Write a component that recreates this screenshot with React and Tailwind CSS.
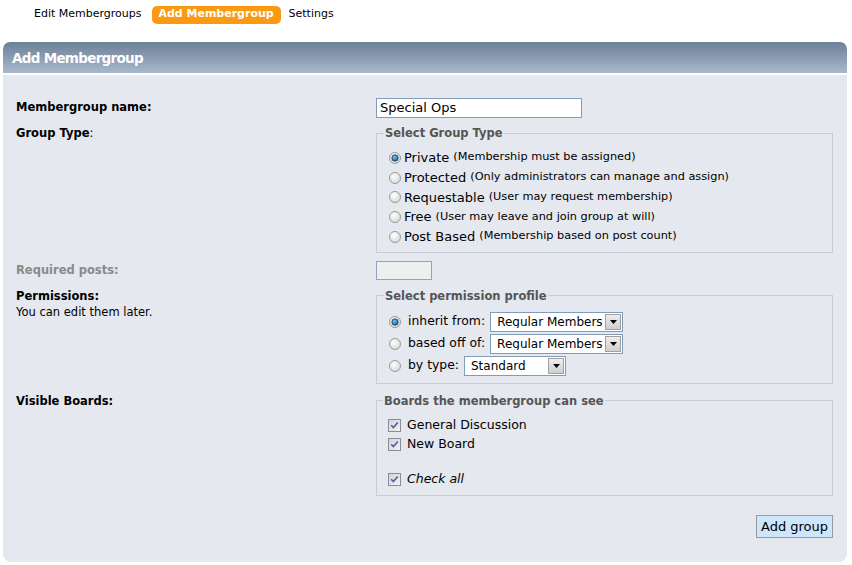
import React from "react";

function Radio({ checked }) {
  return (
    <svg width="12" height="12" viewBox="0 0 12 12" className="shrink-0">
      <defs>
        <radialGradient id="rg" cx="0.4" cy="0.35" r="0.7">
          <stop offset="0" stopColor="#ffffff" />
          <stop offset="1" stopColor="#d6d6d6" />
        </radialGradient>
        <radialGradient id="rb" cx="0.4" cy="0.35" r="0.7">
          <stop offset="0" stopColor="#7cc0ef" />
          <stop offset="1" stopColor="#0b5c99" />
        </radialGradient>
      </defs>
      <circle cx="6" cy="6" r="5.5" fill="url(#rg)" stroke="#9a9a9a" strokeWidth="1" />
      {checked && <circle cx="6" cy="6" r="3.2" fill="url(#rb)" stroke="#1d3f5e" strokeWidth="0.8" />}
    </svg>
  );
}

function Check() {
  return (
    <svg width="13" height="13" viewBox="0 0 13 13" className="shrink-0">
      <defs>
        <linearGradient id="cg" x1="0" y1="0" x2="1" y2="1">
          <stop offset="0" stopColor="#d2d2d6" />
          <stop offset="1" stopColor="#f3f3f5" />
        </linearGradient>
      </defs>
      <rect x="0.5" y="0.5" width="12" height="12" fill="url(#cg)" stroke="#8c8c96" />
      <path d="M3.2 6.2 L5.4 8.6 L9.8 3.4" fill="none" stroke="#4a5fb0" strokeWidth="1.6" />
    </svg>
  );
}

function Select({ value, width }) {
  return (
    <div
      className="flex h-[20px] items-center border border-[#7f9db9] bg-white"
      style={{ width }}
    >
      <span className="flex-1 overflow-hidden whitespace-nowrap pl-[6px] text-[12px] leading-none text-black">
        {value}
      </span>
      <span className="mr-[1px] flex h-[16px] w-[16px] shrink-0 items-center justify-center border border-[#a0a0a0] bg-gradient-to-b from-[#eeeeee] to-[#cfcfcf]">
        <svg width="7" height="4" viewBox="0 0 7 4">
          <path d="M0 0 L7 0 L3.5 4 Z" fill="#000" />
        </svg>
      </span>
    </div>
  );
}

function Legend({ children }) {
  return (
    <legend className="-ml-[5px] px-[1px] text-[11.5px] font-bold leading-4 text-[#555555]">
      {children}
    </legend>
  );
}

export default function App() {
  const groupTypes = [
    ["Private", "(Membership must be assigned)", true],
    ["Protected", "(Only administrators can manage and assign)", false],
    ["Requestable", "(User may request membership)", false],
    ["Free", "(User may leave and join group at will)", false],
    ["Post Based", "(Membership based on post count)", false],
  ];
  return (
    <div className="min-h-[565px] bg-white font-['DejaVu_Sans',Verdana,sans-serif] text-black">
      {/* tabs */}
      <div className="flex h-[28px] items-center pl-[34px] pt-[1px] text-[11px]">
        <span>Edit Membergroups</span>
        <span className="ml-[10px] flex h-[18px] w-[129px] items-center justify-center rounded-[5px] bg-[#f99a12] font-bold text-white">
          Add Membergroup
        </span>
        <span className="ml-[8px]">Settings</span>
      </div>

      <div className="ml-[3px] mt-[14px] w-[844px]">
        <div className="flex h-[31px] items-center rounded-t-[7px] bg-gradient-to-b from-[#6c8097] to-[#a9b9cd] pl-[9px] pt-[2px] text-[13.5px] font-bold tracking-[-0.7px] text-white">
          Add Membergroup
        </div>
        <div className="mt-[2px] rounded-b-[8px] bg-[#e5e8ee] pb-[24px] pl-[13px] pr-[14px] pt-[23px] text-[11.5px]">
          {/* name */}
          <div className="flex items-center">
            <div className="w-[360px] font-bold">Membergroup name:</div>
            <div className="flex h-[20px] w-[206px] items-center border border-[#7f9db9] bg-white pl-[3px] text-[13px]">
              Special Ops
            </div>
          </div>

          {/* group type */}
          <div className="mt-[7px] flex items-start">
            <div className="w-[360px] leading-4">
              <span className="font-bold">Group Type</span>:
            </div>
            <fieldset className="flex-1 border border-[#c8ccd3] pb-[5px] pl-[12px]">
              <Legend>Select Group Type</Legend>
              <div className="mt-[7px] flex flex-col">
                {groupTypes.map(([a, b, c]) => (
                  <div key={a} className="flex h-[19.75px] items-center">
                    <Radio checked={c} />
                    <span className="ml-[3px] text-[13px]">{a}</span>
                    <span className="ml-[4px] text-[11.3px]">{b}</span>
                  </div>
                ))}
              </div>
            </fieldset>
          </div>

          {/* required posts */}
          <div className="mt-[8px] flex items-center">
            <div className="w-[360px] font-bold text-[#8a8a8a]">Required posts:</div>
            <div className="h-[19px] w-[56px] border border-[#8fa5bf] bg-[#eeeff1]" />
          </div>

          {/* permissions */}
          <div className="mt-[8px] flex items-start">
            <div className="w-[360px] leading-4">
              <div className="font-bold">Permissions:</div>
              <div className="text-[11.5px]">You can edit them later.</div>
            </div>
            <fieldset className="flex-1 border border-[#c8ccd3] pb-[7px] pl-[12px]">
              <Legend>Select permission profile</Legend>
              <div className="mt-[8px] flex flex-col gap-[2px] text-[12.4px]">
                <div className="flex h-[20px] items-center">
                  <Radio checked />
                  <span className="ml-[7px]">inherit from:</span>
                  <span className="ml-[5px]">
                    <Select value="Regular Members" width={133} />
                  </span>
                </div>
                <div className="flex h-[20px] items-center">
                  <Radio />
                  <span className="ml-[7px]">based off of:</span>
                  <span className="ml-[5px]">
                    <Select value="Regular Members" width={133} />
                  </span>
                </div>
                <div className="flex h-[20px] items-center">
                  <Radio />
                  <span className="ml-[7px]">by type:</span>
                  <span className="ml-[5px]">
                    <Select value="Standard" width={102} />
                  </span>
                </div>
              </div>
            </fieldset>
          </div>

          {/* visible boards */}
          <div className="mt-[9px] flex items-start">
            <div className="w-[360px] font-bold leading-4">Visible Boards:</div>
            <fieldset className="flex-1 border border-[#c8ccd3] pb-[6px] pl-[11px]">
              <Legend>Boards the membergroup can see</Legend>
              <div className="mt-[7px] flex flex-col text-[12.5px]">
                <div className="flex h-[19px] items-center">
                  <Check />
                  <span className="ml-[6px]">General Discussion</span>
                </div>
                <div className="flex h-[19px] items-center">
                  <Check />
                  <span className="ml-[6px]">New Board</span>
                </div>
                <div className="h-[16px]" />
                <div className="flex h-[19px] items-center">
                  <Check />
                  <span className="ml-[6px] italic">Check all</span>
                </div>
              </div>
            </fieldset>
          </div>

          {/* button */}
          <div className="mt-[19px] flex justify-end">
            <button className="h-[23px] w-[77px] border border-[#9a9a9a] bg-[#cde6fb] text-[13px] text-black">
              Add group
            </button>
          </div>
        </div>
      </div>
    </div>
  );
}
